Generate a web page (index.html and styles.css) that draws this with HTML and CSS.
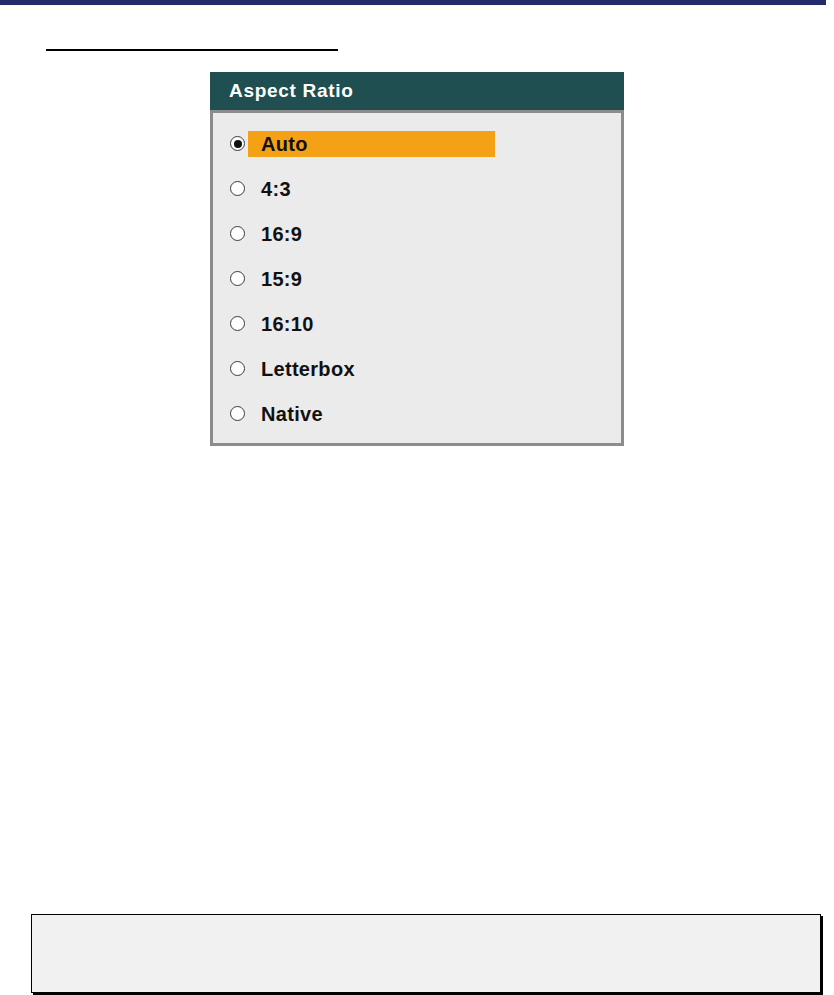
FILE: index.html
```html
<!DOCTYPE html>
<html>
<head>
<meta charset="utf-8">
<link rel="stylesheet" href="styles.css">
</head>
<body>
<div class="topbar"></div>
<div class="rule"></div>
<div class="dialog">
  <div class="dialog-title">Aspect Ratio</div>
  <div class="dialog-body">
    <div class="row"><span class="radio checked"></span><span class="label selected">Auto</span></div>
    <div class="row"><span class="radio"></span><span class="label">4:3</span></div>
    <div class="row"><span class="radio"></span><span class="label">16:9</span></div>
    <div class="row"><span class="radio"></span><span class="label">15:9</span></div>
    <div class="row"><span class="radio"></span><span class="label">16:10</span></div>
    <div class="row"><span class="radio"></span><span class="label">Letterbox</span></div>
    <div class="row"><span class="radio"></span><span class="label">Native</span></div>
  </div>
</div>
<div class="note"></div>
</body>
</html>
```
FILE: styles.css
```css
html, body {
  margin: 0;
  padding: 0;
  background: #ffffff;
}
body {
  width: 834px;
  height: 995px;
  overflow: hidden;
  font-family: "Liberation Sans", Arial, sans-serif;
}
.topbar {
  width: 826px;
  height: 5px;
  background: #252a6c;
}
.rule {
  margin-top: 44px;
  margin-left: 46px;
  width: 292px;
  height: 2px;
  background: #000000;
}
.dialog {
  margin-top: 21px;
  margin-left: 210px;
  width: 414px;
}
.dialog-title {
  height: 38px;
  background: #1f4f50;
  color: #ffffff;
  font-weight: bold;
  font-size: 19px;
  letter-spacing: 0.7px;
  line-height: 38px;
  padding-left: 19px;
}
.dialog-body {
  background: #ebebeb;
  border: 3px solid #8c8c8c;
  padding: 8px 0 7px 17px;
}
.row {
  height: 45px;
  display: flex;
  align-items: center;
  gap: 3px;
}
.radio {
  flex: 0 0 auto;
  box-sizing: border-box;
  width: 15px;
  height: 15px;
  border: 1.5px solid #3a3a3a;
  border-radius: 50%;
  background: #ffffff;
  display: flex;
  align-items: center;
  justify-content: center;
}
.radio.checked::after {
  content: "";
  width: 8px;
  height: 8px;
  border-radius: 50%;
  background: #111111;
}
.label {
  flex: 0 0 auto;
  width: 234px;
  height: 26px;
  padding-left: 13px;
  line-height: 27px;
  font-weight: bold;
  font-size: 20px;
  letter-spacing: 0.3px;
  color: #111111;
}
.label.selected {
  background: #f4a116;
}
.note {
  margin-top: 468px;
  margin-left: 31px;
  width: 788px;
  height: 77px;
  background: #f1f1f1;
  border: 1px solid #000000;
  box-shadow: 2px 2px 0 #000000;
}
```
